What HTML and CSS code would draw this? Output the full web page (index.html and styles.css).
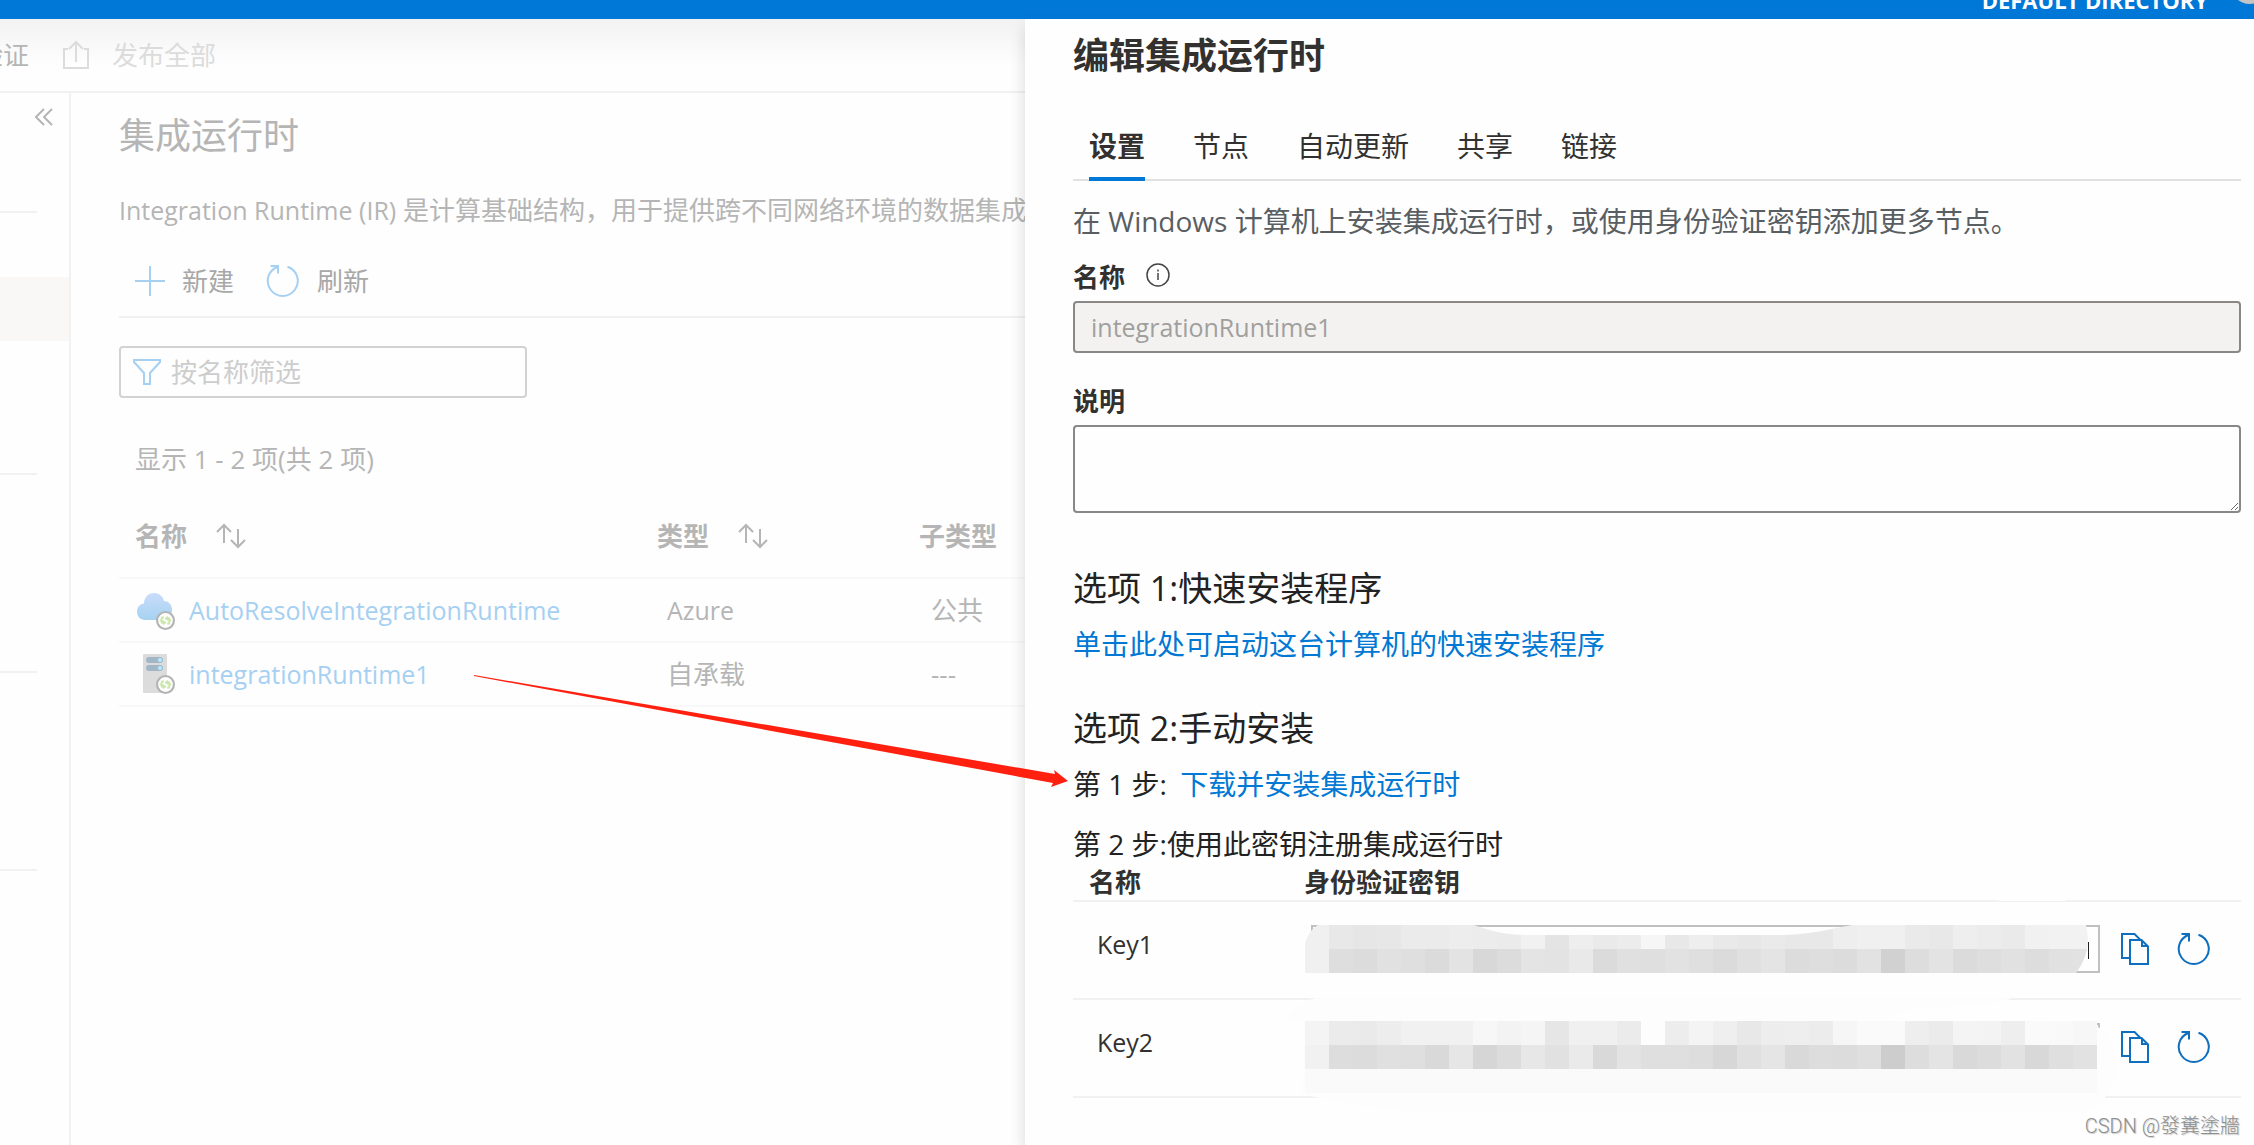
FILE: index.html
```html
<!DOCTYPE html>
<html lang="zh-CN">
<head>
  <meta charset="UTF-8">
  <title>集成运行时</title>
  <meta name="viewport" content="width=device-width, initial-scale=1.0">
  <link rel="stylesheet" href="styles.css">
</head>
<body>

  <svg class="symbols" aria-hidden="true">
    <symbol id="icon-refresh" viewBox="0 0 34 34">
      <path d="M4.500 2H12V9.500M12 2.700A15 15 0 1 0 21.500 2.700" fill="none" stroke="currentColor" stroke-width="2"/>
    </symbol>
    <symbol id="icon-copy" viewBox="0 0 28 32">
      <path d="M9 25H1V1H13.500L20 7.500M9 7H20.500L27 13.500V31H9ZM21 7V13H27" fill="none" stroke="currentColor" stroke-width="2"/>
    </symbol>
    <symbol id="icon-sort" viewBox="0 0 30 26">
      <path d="M8 20V2M1 9L8 2L15 9M22 6V24M15 17L22 24L29 17" fill="none" stroke="currentColor" stroke-width="2"/>
    </symbol>
    <symbol id="icon-badge" viewBox="0 0 18 18">
      <circle cx="9" cy="9" r="8" fill="#fefefe" stroke="#b3b3b3" stroke-width="2"/>
      <path d="M7.500 6H5.500V11H8M6.500 12.500L8.500 11L6.500 9.500M10.500 12H12.500V7H10M11.500 5.500L9.500 7L11.500 8.500M3.500 9H5M13 9H14.500" fill="none" stroke="#cbe8ac" stroke-width="1.800"/>
    </symbol>
  </svg>

  <header class="topbar">
    <span class="directory">DEFAULT DIRECTORY</span>
    <span class="avatar"></span>
  </header>

  <div class="shell">
    <div class="workspace">
      <div class="toolbar">
        <button class="validate">验证</button>
        <button class="publish" disabled>
          <svg width="26" height="30" viewBox="0 0 26 30"><path d="M5 9H1V28H25V9H21M13 22V2M6 9L13 2L20 9" fill="none" stroke="currentColor" stroke-width="2"/></svg>
          发布全部
        </button>
      </div>

      <div class="content">
        <nav class="sidebar">
          <button class="collapse" aria-label="折叠">
            <svg width="18" height="18" viewBox="0 0 18 18"><path d="M9 1L1 9L9 17M17 1L9 9L17 17" fill="none" stroke="currentColor" stroke-width="2"/></svg>
          </button>
          <div class="nav-group first"></div>
          <div class="nav-selected"></div>
          <div class="nav-group second"></div>
          <div class="nav-group"></div>
          <div class="nav-group"></div>
        </nav>

        <main>
          <h1>集成运行时</h1>
          <p class="intro"><span class="latin">Integration Runtime (IR)</span> 是计算基础结构，用于提供跨不同网络环境的数据集成</p>

          <div class="commands">
            <button>
              <svg width="30" height="32" viewBox="0 0 30 32"><path d="M0 16H30M15 1V31" stroke="#a6d0f2" stroke-width="2"/></svg>
              新建
            </button>
            <button>
              <svg class="blue" width="34" height="34"><use href="#icon-refresh"/></svg>
              刷新
            </button>
          </div>

          <div class="filter">
            <svg width="28" height="26" viewBox="0 0 28 26"><path d="M1 1H27V3L17 14V25H11V14L1 3Z" fill="none" stroke="#a6d0f2" stroke-width="2"/></svg>
            <input type="text" aria-label="按名称筛选" placeholder="按名称筛选">
          </div>

          <p class="count">显示 1 - 2 项(共 2 项)</p>

          <table class="runtimes">
            <thead>
              <tr>
                <th class="col-name">名称 <svg width="30" height="26"><use href="#icon-sort"/></svg></th>
                <th class="col-type">类型 <svg width="30" height="26"><use href="#icon-sort"/></svg></th>
                <th>子类型</th>
              </tr>
            </thead>
            <tbody>
              <tr>
                <td>
                  <a class="latin" href="#">
                    <svg width="40" height="42" viewBox="0 0 40 42">
                      <defs>
                        <linearGradient id="cloud" x1="0" y1="0" x2="0" y2="1">
                          <stop offset="0" stop-color="#c9dcfa"/>
                          <stop offset="1" stop-color="#a6d2f2"/>
                        </linearGradient>
                      </defs>
                      <path d="M9 31C4 31 1 27 1 22.500C1 18 4 15 8 14.500C8 9 12 4 18 4C23 4 27 7 28 12C33 12 36 16 36 21C36 27 32 31 27 31Z" fill="url(#cloud)"/>
                      <use href="#icon-badge" x="20" y="22" width="19" height="19"/>
                    </svg>
                    AutoResolveIntegrationRuntime
                  </a>
                </td>
                <td class="latin">Azure</td>
                <td>公共</td>
              </tr>
              <tr>
                <td>
                  <a class="latin" href="#">
                    <svg width="40" height="42" viewBox="0 0 40 42">
                      <rect x="7" y="1" width="24" height="39" rx="1" fill="#dcdcdc"/>
                      <rect x="10" y="4" width="17" height="6" rx="3" fill="#a3b6c8"/>
                      <rect x="10" y="12" width="17" height="6" rx="3" fill="#a3b6c8"/>
                      <circle cx="24" cy="7" r="2" fill="#b4ecfa"/>
                      <circle cx="24" cy="15" r="2" fill="#b4ecfa"/>
                      <use href="#icon-badge" x="20" y="22" width="19" height="19"/>
                    </svg>
                    integrationRuntime1
                  </a>
                </td>
                <td>自承载</td>
                <td>---</td>
              </tr>
            </tbody>
          </table>
        </main>
      </div>
    </div>

    <section class="panel">
      <h2>编辑集成运行时</h2>
      <nav class="tabs">
        <button class="active">设置</button>
        <button>节点</button>
        <button>自动更新</button>
        <button>共享</button>
        <button>链接</button>
      </nav>

      <p class="hint">在 Windows 计算机上安装集成运行时，或使用身份验证密钥添加更多节点。</p>

      <div class="field">
        <label for="name">名称
          <svg width="24" height="28" viewBox="0 0 24 28"><circle cx="12" cy="12" r="11" fill="none" stroke="#444" stroke-width="1.500"/><path d="M12 10V17M12 6.500V8.500" stroke="#444" stroke-width="1.500"/></svg>
        </label>
        <input class="latin" type="text" id="name" value="integrationRuntime1" disabled>
      </div>
      <div class="field">
        <label for="desc">说明</label>
        <textarea id="desc"></textarea>
      </div>

      <h3>选项 1:快速安装程序</h3>
      <p class="step"><a href="#">单击此处可启动这台计算机的快速安装程序</a></p>

      <h3 class="manual">选项 2:手动安装</h3>
      <p class="step">第 1 步: <a class="download" href="#">下载并安装集成运行时</a></p>
      <p class="step register">第 2 步:使用此密钥注册集成运行时</p>

      <div class="keys">
        <table>
          <thead>
            <tr><th class="col-key">名称</th><th>身份验证密钥</th></tr>
          </thead>
          <tbody>
            <tr>
              <td class="latin">Key1</td>
              <td>
                <div class="key-row">
                  <input type="text" aria-label="Key1" readonly>
                  <button aria-label="复制"><svg width="28" height="32"><use href="#icon-copy"/></svg></button>
                  <button aria-label="刷新"><svg width="34" height="34"><use href="#icon-refresh"/></svg></button>
                </div>
              </td>
            </tr>
            <tr>
              <td class="latin">Key2</td>
              <td>
                <div class="key-row">
                  <input type="text" aria-label="Key2" readonly>
                  <button aria-label="复制"><svg width="28" height="32"><use href="#icon-copy"/></svg></button>
                  <button aria-label="刷新"><svg width="34" height="34"><use href="#icon-refresh"/></svg></button>
                </div>
              </td>
            </tr>
          </tbody>
        </table>
        <!-- hides both keys -->
        <svg class="mosaic" width="820" height="230" viewBox="0 0 820 230" aria-hidden="true">
          <clipPath id="brush"><path d="M0 48Q5 34 13 30H169C190 37 200 40 222 40H470C505 40 520 35 547 30H781Q788 56 771 78H0Z"/></clipPath>
          <path d="M693 6Q727 -12 762 6Z" fill="#fefefe"/>
          <path d="M4 48H100V78H4Z" fill="#fefefe"/>
          <g id="mask1" clip-path="url(#brush)"></g>
          <rect x="783" y="47" width="1" height="17" fill="#222"/>
          <path d="M-20 126Q-8 106 15 102H710Q690 110 640 112Q600 112 580 126Z" fill="#fdfdfd"/>
          <path d="M0 126H780Q812 136 812 172Q812 200 780 218H120Q40 210 -3 199Z" fill="#fdfdfd"/>
          <rect x="0" y="174" width="792" height="24" fill="#fafafa"/>
          <g id="mask2"></g>
        </svg>
      </div>
    </section>
  </div>

  <svg class="arrow" width="600" height="120" viewBox="0 0 600 120" aria-hidden="true">
    <path d="M4 5L585 104L584 100L598 111L581 117L583 113L4 6Z" fill="#ff2010"/>
  </svg>
  <div class="watermark">CSDN @發糞塗牆</div>

  <script>
    // grey level of every 24px block, one hex pair each
    const masks = {
      mask1: {
        top: 30,
        rows: [
          "f0e8e6e7ebebedecebf1e4eeeaecf6e8eee9e7eae8e8eef0f0eae8eeeceaf1f2f2",
          "f0dedce1dfdbe3d8dce4e3e9dbe0dfe2dfdbe0e4dcdedce2d1dde3dbdee1dde1e2"
        ]
      },
      mask2: {
        top: 126,
        rows: [
          "f4ebeaedf1f1f1f7f3f5e6f0f0ebfdedf4efe8edeeecf6fafaeeebf4f3eefaf9f7",
          "f1dddce0dfd9e6d6dce7e1ead9e3dfdfddd7e0e5d9dddcdfcddde4d9dce2d8dfe2"
        ]
      }
    };

    for (const id in masks) {
      const group = document.getElementById(id);
      masks[id].rows.forEach((row, r) => {
        row.match(/../g).forEach((level, i) => {
          const rect = document.createElementNS("http://www.w3.org/2000/svg", "rect");
          rect.setAttribute("x", i * 24);
          rect.setAttribute("y", masks[id].top + r * 24);
          rect.setAttribute("width", 24);
          rect.setAttribute("height", 24);
          rect.setAttribute("fill", "#" + level.repeat(3));
          group.appendChild(rect);
        });
      });
    }
  </script>
</body>
</html>
```
FILE: styles.css
```css
* {
  box-sizing: border-box;
}
body {
  margin: 0;
  min-height: 100vh;
  display: flex;
  flex-direction: column;
  position: relative;
  overflow: hidden;
  background-color: #fefefe;
  color: #323130;
  font-family: "Open Sans", "Noto Sans CJK SC", sans-serif;
  font-size: 26px;
  line-height: 36px;
}
h1, h2, h3, p {
  margin: 0;
  font-weight: 400;
}
button {
  padding: 0;
  border: none;
  background: none;
  color: inherit;
  font: inherit;
}
input, textarea {
  font: inherit;
}
a {
  color: #0078d4;
  text-decoration: none;
}
table {
  width: 100%;
  border-collapse: collapse;
  table-layout: fixed;
}
th {
  text-align: left;
}
svg {
  flex: none;
}
.latin {
  font-size: 25px;
}
.symbols {
  position: absolute;
  width: 0;
  height: 0;
}

.topbar {
  display: flex;
  justify-content: flex-end;
  align-items: flex-end;
  gap: 22px;
  height: 19px;
  overflow: hidden;
  background-color: #0078d7;
}
.directory {
  padding-bottom: 7px;
  color: white;
  font-size: 22px;
  line-height: 24px;
  font-weight: 700;
}
.avatar {
  flex: none;
  width: 40px;
  height: 40px;
  margin: 0 -16px 15px 0;
  border-radius: 50%;
  background-color: #c4c4c4;
}

.shell {
  flex: 1;
  display: grid;
  grid-template-columns: minmax(0, 1025fr) minmax(0, 1229fr);
}

/* dimmed page behind the panel */
.workspace {
  display: flex;
  flex-direction: column;
  overflow: hidden;
  color: #b5b5b5;
}
.toolbar {
  display: flex;
  align-items: center;
  gap: 34px;
  height: 74px;
  border-bottom: 2px solid #f1f1f1;
  background: linear-gradient(#f2f2f2, #fefefe 46px);
  white-space: nowrap;
}
.validate {
  margin-left: -23px;
}
.publish {
  display: flex;
  align-items: center;
  gap: 23px;
  color: #dcdcdc;
}
.content {
  flex: 1;
  display: flex;
}
.sidebar {
  flex: none;
  width: 71px;
  border-right: 2px solid #f1f1f1;
}
.collapse {
  display: block;
  height: 18px;
  margin: 15px 16px 0 auto;
  line-height: 18px;
}
.collapse svg {
  display: block;
}
.nav-group {
  width: 37px;
  height: 198px;
  border-bottom: 2px solid #f1f1f1;
}
.nav-group.first {
  height: 87px;
}
.nav-group.second {
  height: 134px;
}
.nav-selected {
  height: 64px;
  margin-top: 64px;
  background-color: #f9f8f7;
}
main {
  flex: 1;
  min-width: 0;
  padding: 19px 0 0 48px;
}
h1 {
  font-size: 36px;
  line-height: 48px;
}
.intro {
  margin-top: 32px;
  white-space: nowrap;
}
.commands {
  display: flex;
  gap: 32px;
  height: 72px;
  margin-top: 18px;
  padding-left: 16px;
  border-bottom: 2px solid #f1f1f1;
}
.commands button {
  display: flex;
  align-items: center;
  gap: 17px;
  color: #a8a8a8;
}
.blue {
  color: #a6d0f2;
}
.filter {
  display: flex;
  align-items: center;
  gap: 10px;
  width: 408px;
  height: 52px;
  margin-top: 28px;
  padding: 0 12px;
  border: 2px solid #d2d2d2;
  border-radius: 4px;
}
.filter input {
  flex: 1;
  min-width: 0;
  padding: 0;
  border: none;
  background: none;
}
.filter input::placeholder {
  color: #cdcdcd;
}
.count {
  margin-top: 43px;
  padding-left: 16px;
}
.runtimes {
  margin-top: 18px;
}
.runtimes tr {
  height: 64px;
  border-bottom: 2px solid #f8f8f8;
}
.runtimes thead tr {
  height: 83px;
}
.runtimes th {
  padding: 0 0 0 16px;
}
.runtimes th svg {
  margin-left: 22px;
  vertical-align: -3px;
}
.runtimes td {
  padding: 0 0 0 26px;
}
.runtimes td:first-child {
  padding-left: 17px;
}
.runtimes td:last-child {
  padding-left: 28px;
}
.col-name {
  width: 522px;
}
.col-type {
  width: 262px;
}
.runtimes a {
  display: flex;
  align-items: center;
  gap: 13px;
  color: #a6d0f2;
}

.panel {
  position: relative;
  padding: 13px 13px 0 48px;
  background-color: #fefefe;
  box-shadow: -2px 8px 14px rgba(0,0,0,0.12);
}
h2 {
  font-size: 36px;
  line-height: 48px;
  font-weight: 700;
}
.tabs {
  display: flex;
  gap: 48px;
  margin-top: 32px;
  padding-left: 16px;
  border-bottom: 2px solid #e1e1e1;
  font-size: 28px;
}
.tabs button {
  margin-bottom: -2px;
  padding: 16px 0 13px;
  border-bottom: 4px solid transparent;
}
.tabs .active {
  border-bottom-color: #0078d7;
  font-weight: 700;
}
.hint {
  margin-top: 20px;
  color: #595e63;
  font-size: 28px;
  line-height: 40px;
}
.field {
  margin-top: 18px;
}
.field + .field {
  margin-top: 30px;
}
.field label {
  display: flex;
  align-items: center;
  gap: 21px;
  margin-bottom: 6px;
  font-weight: 700;
}
.field input, .field textarea {
  display: block;
  width: 100%;
  height: 52px;
  padding: 0 16px;
  border: 2px solid #8a8886;
  border-radius: 4px;
  background-color: #fefefe;
}
.field input:disabled {
  background-color: #f3f2f1;
  color: #a19f9d;
}
.field textarea {
  height: 88px;
}
h3 {
  margin-top: 51px;
  color: #222;
  font-size: 34px;
  line-height: 48px;
}
h3.manual {
  margin-top: 40px;
}
.step {
  margin-top: 12px;
  color: #222;
  font-size: 28px;
  line-height: 40px;
}
.download {
  margin-left: 6px;
}
.step.register {
  margin-top: 20px;
}

.keys {
  position: relative;
}
.keys tr {
  height: 98px;
  border-bottom: 2px solid #f1f1f1;
}
.keys thead tr {
  height: 36px;
}
.keys th {
  padding: 0;
}
.keys .col-key {
  width: 231px;
  padding-left: 16px;
}
.keys td {
  padding: 0;
}
.keys td:first-child {
  padding: 0 0 12px 24px;
}
.key-row {
  display: flex;
  align-items: center;
  padding: 0 30px 2px 7px;
  color: #106ebe;
}
.key-row input {
  flex: 1;
  min-width: 0;
  height: 48px;
  margin-right: 21px;
  border: 2px solid #c0c0c0;
  background-color: #fefefe;
}
.key-row button + button {
  margin-left: 28px;
}
.key-row svg {
  display: block;
}
.mosaic {
  position: absolute;
  left: 232px;
  top: 31px;
  overflow: visible;
}

.arrow {
  position: absolute;
  left: 470px;
  top: 670px;
}
.watermark {
  position: absolute;
  right: 14px;
  bottom: 5px;
  color: #8e8e8e;
  font-family: Roboto, "Noto Sans CJK TC", sans-serif;
  font-size: 20px;
  line-height: 28px;
  font-weight: 300;
  text-shadow: 1px 1px 1px #ccc;
}
```
